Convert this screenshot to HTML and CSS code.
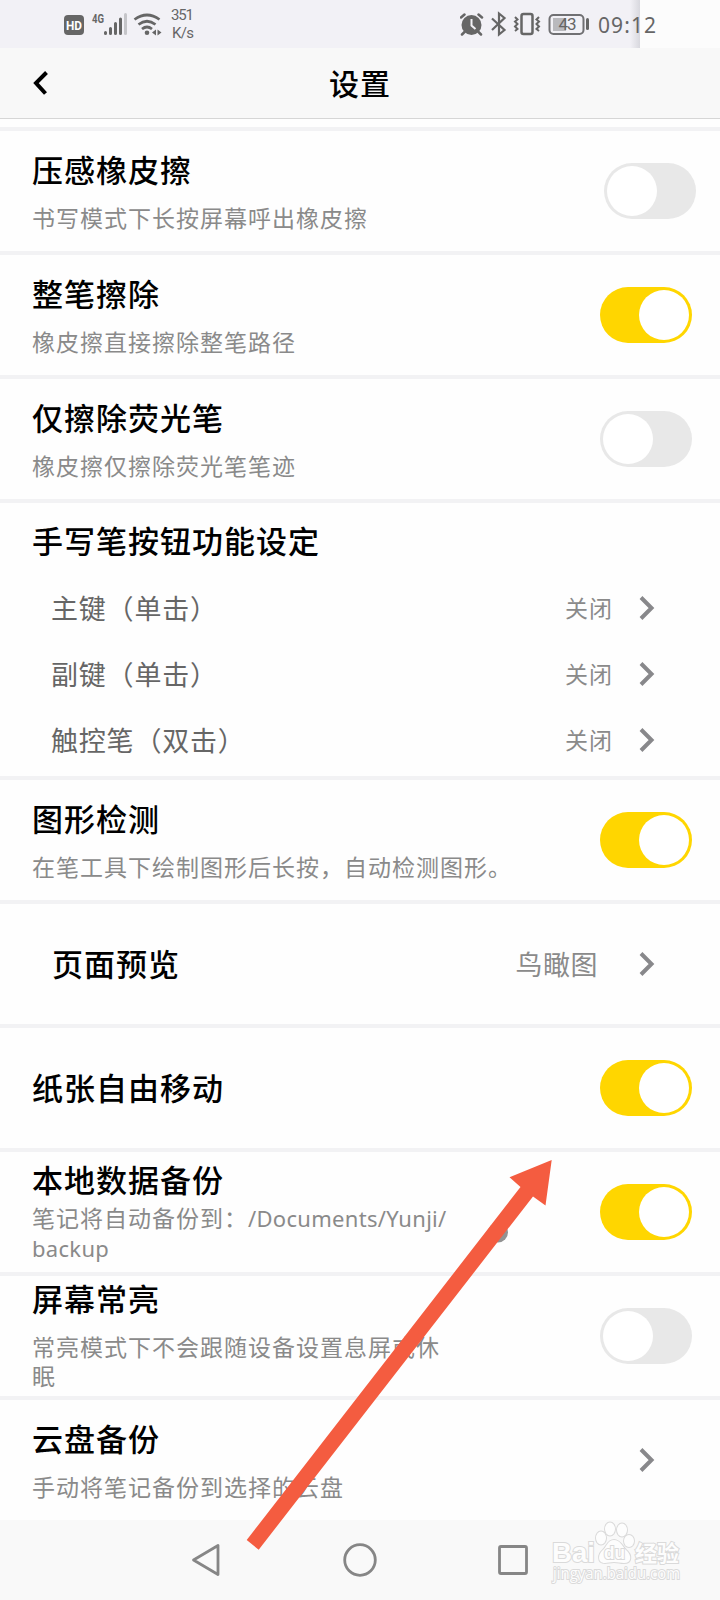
FILE: index.html
```
<!DOCTYPE html>
<html lang="zh-CN">
<head>
    <meta charset="UTF-8">
    <meta name="viewport" content="width=device-width, initial-scale=1.0">
    <title>设置</title>
    <link rel="stylesheet" href="styles.css">
</head>
<body>

    <!-- Status bar -->
    <div class="status-bar">
        <svg class="status-left" width="142" height="48" viewBox="60 0 142 48">
            <rect x="64" y="15" width="20" height="20" rx="4" fill="#666"/>
            <text x="66" y="30" class="hd" textLength="16" lengthAdjust="spacingAndGlyphs">HD</text>
            <text x="92" y="23" class="net" textLength="12" lengthAdjust="spacingAndGlyphs">4G</text>
            <g stroke="#666" stroke-width="3" stroke-linecap="round">
                <path d="M105.5 32.5v1M110.5 28.5v5M115.5 23.5v10M120.5 19v14.5"/>
                <path d="M125.5 14.500v19" stroke="#c5c5c9"/>
            </g>
            <g fill="none" stroke="#666" stroke-width="2.700">
                <path d="M134.500 19.500q12.500-9 25 0M138.500 24.500q8.500-6.500 17 0M142 29q5-4 10 0"/>
            </g>
            <circle cx="147" cy="32.700" r="2.300" fill="#666"/>
            <path d="M152 32.500l4-3v6zM157.500 29.500l4 3-4 3z" fill="#666"/>
            <text x="171" y="20" class="speed" textLength="23">351</text>
            <text x="172" y="38" class="speed" textLength="22">K/s</text>
        </svg>
        <svg class="status-right" width="260" height="48" viewBox="460 0 260 48">
            <defs>
                <linearGradient id="edge">
                    <stop offset="0" stop-color="#d8d8de" stop-opacity="0"/>
                    <stop offset="1" stop-color="#d8d8de"/>
                </linearGradient>
            </defs>
            <rect x="630" y="0" width="10" height="48" fill="url(#edge)"/>
            <rect x="640" y="0" width="80" height="48" fill="#fcfcfc"/>
            <!-- alarm -->
            <circle cx="471.500" cy="25" r="10" fill="#666"/>
            <path d="M461 17.500l3.500-3M478.500 14.500l3.500 3M464.500 32l-2.500 2.500M478.500 32l2.500 2.500" stroke="#666" stroke-width="2.500" stroke-linecap="round"/>
            <path d="M471.500 19v6.500l4 3.500" stroke="#f2f1f6" stroke-width="2" fill="none"/>
            <!-- bluetooth -->
            <path d="M492 18.500l12.500 11.500-5.500 4.500v-21l5.500 4.500-12.500 12" stroke="#666" stroke-width="2.200" fill="none"/>
            <!-- vibrate -->
            <rect x="521.500" y="14" width="11" height="20" rx="2" stroke="#666" stroke-width="2.500" fill="none"/>
            <path d="M515 17l2.500 2.500-2.500 2 2.500 2.500-2.500 2.500 2.500 2.500-2.500 2M539 17l-2.500 2.500 2.500 2-2.500 2.500 2.500 2.500-2.500 2.500 2.500 2" stroke="#666" stroke-width="2" fill="none"/>
            <!-- battery -->
            <rect x="549.500" y="15" width="34" height="19" rx="4" stroke="#707073" stroke-width="2" fill="none"/>
            <rect x="553" y="18" width="13" height="13" fill="#b9b9bd"/>
            <path d="M587.500 19.500v9" stroke="#666" stroke-width="3" stroke-linecap="round"/>
            <text x="558.500" y="30" class="level" textLength="18">43</text>
            <text x="598" y="32.500" class="clock" textLength="58">09:12</text>
        </svg>
    </div>

    <!-- Title bar -->
    <div class="header">
        <svg class="back" width="16" height="26" viewBox="0 0 16 26"><path d="M14.500 2.500L4 13l9.500 10.500" fill="none" stroke="#000" stroke-width="4"/></svg>
        <h1>设置</h1>
    </div>

    <!-- Settings list -->
    <div class="settings">
        <div class="row shifted">
            <div class="text">
                <h2>压感橡皮擦</h2>
                <p>书写模式下长按屏幕呼出橡皮擦</p>
            </div>
            <div class="switch"></div>
        </div>

        <div class="row">
            <div class="text">
                <h2>整笔擦除</h2>
                <p>橡皮擦直接擦除整笔路径</p>
            </div>
            <div class="switch on"></div>
        </div>

        <div class="row">
            <div class="text">
                <h2>仅擦除荧光笔</h2>
                <p>橡皮擦仅擦除荧光笔笔迹</p>
            </div>
            <div class="switch"></div>
        </div>

        <div class="group">
            <h2>手写笔按钮功能设定</h2>
            <div class="option">
                <span class="name">主键（单击）</span>
                <span class="value">关闭</span>
                <svg class="arrow" width="16" height="26" viewBox="0 0 16 26"><path d="M2 2.500L12.500 13 2 23.500"/></svg>
            </div>
            <div class="option">
                <span class="name">副键（单击）</span>
                <span class="value">关闭</span>
                <svg class="arrow" width="16" height="26" viewBox="0 0 16 26"><path d="M2 2.500L12.500 13 2 23.500"/></svg>
            </div>
            <div class="option">
                <span class="name">触控笔（双击）</span>
                <span class="value">关闭</span>
                <svg class="arrow" width="16" height="26" viewBox="0 0 16 26"><path d="M2 2.500L12.500 13 2 23.500"/></svg>
            </div>
        </div>

        <div class="row">
            <div class="text">
                <h2>图形检测</h2>
                <p>在笔工具下绘制图形后长按，自动检测图形。</p>
            </div>
            <div class="switch on"></div>
        </div>

        <div class="row preview">
            <h2>页面预览</h2>
            <span class="value">鸟瞰图</span>
            <svg class="arrow" width="16" height="26" viewBox="0 0 16 26"><path d="M2 2.500L12.500 13 2 23.500"/></svg>
        </div>

        <div class="row single">
            <h2>纸张自由移动</h2>
            <div class="switch on"></div>
        </div>

        <div class="row">
            <div class="text backup">
                <h2>本地数据备份</h2>
                <p>笔记将自动备份到：<span class="path">/Documents/Yunji/<br>backup</span></p>
            </div>
            <div class="switch on"></div>
        </div>

        <div class="row">
            <div class="text screen">
                <h2>屏幕常亮</h2>
                <p>常亮模式下不会跟随设备设置息屏或休<br>眠</p>
            </div>
            <div class="switch"></div>
        </div>

        <div class="row link">
            <div class="text">
                <h2>云盘备份</h2>
                <p>手动将笔记备份到选择的云盘</p>
            </div>
            <svg class="arrow" width="16" height="26" viewBox="0 0 16 26"><path d="M2 2.500L12.500 13 2 23.500"/></svg>
        </div>
    </div>

    <!-- System navigation -->
    <div class="nav-bar">
        <svg width="32" height="34" viewBox="0 0 32 34"><path d="M3.500 17L28 2.500v29z"/></svg>
        <svg width="34" height="34" viewBox="0 0 34 34"><circle cx="17" cy="17" r="15.300"/></svg>
        <svg width="32" height="32" viewBox="0 0 32 32"><rect x="2.500" y="2.500" width="27" height="27" rx="1.500"/></svg>
    </div>

    <!-- Pointer arrow over the list -->
    <svg class="pointer" width="320" height="400" viewBox="240 1155 320 400">
        <circle cx="498" cy="1232.500" r="10" fill="#929292"/>
        <path d="M551.700 1160L545.500 1205.500 533 1196.500 258.700 1549.700 246.700 1540 520.500 1187 509.500 1177.300z" fill="#f45c40"/>
    </svg>

    <!-- Watermark -->
    <svg class="watermark" width="140" height="70" viewBox="546 1518 140 70">
        <text x="552" y="1562" class="brand" textLength="43" lengthAdjust="spacingAndGlyphs">Bai</text>
        <g class="paw">
            <ellipse cx="601" cy="1538" rx="5" ry="6.500"/>
            <ellipse cx="610" cy="1529" rx="5" ry="6.500"/>
            <ellipse cx="622" cy="1530" rx="5" ry="6.500"/>
            <ellipse cx="629" cy="1541" rx="5" ry="6"/>
            <path d="M614 1540c6 0 8 6 12 10 6 5 6 13-2 13-4 0-6-1-10-1s-6 1-9 1c-8 0-7-9-2-13 4-4 5-10 11-10z"/>
        </g>
        <text x="604" y="1559" class="du" textLength="21" lengthAdjust="spacingAndGlyphs">du</text>
        <text x="635" y="1561" class="cn" textLength="44" lengthAdjust="spacingAndGlyphs">经验</text>
        <text x="553" y="1579" class="site" textLength="127" lengthAdjust="spacingAndGlyphs">jingyan.baidu.com</text>
    </svg>

</body>
</html>
```
FILE: styles.css
```
* {
    box-sizing: border-box;
}

body {
    width: 720px;
    margin: 0;
    position: relative;
    background-color: #fefefe;
    font-family: "Noto Sans CJK SC", sans-serif;
    color: #000;
}

h1, h2, p {
    margin: 0;
}

svg {
    display: block;
    flex: none;
}

/* status bar */
.status-bar {
    display: flex;
    justify-content: space-between;
    height: 48px;
    padding-left: 60px;
    background-color: #f2f1f6;
}

.status-bar text {
    fill: #666;
}

.status-bar .hd {
    font: bold 13px Roboto, sans-serif;
    fill: #fff;
}

.status-bar .net {
    font: bold 13px Roboto, sans-serif;
}

.status-bar .speed {
    font: 15px Roboto, sans-serif;
}

.status-bar .level {
    font: 17px Roboto, sans-serif;
}

.status-bar .clock {
    font: 21px "Noto Sans", sans-serif;
}

/* title bar */
.header {
    display: grid;
    grid-template-columns: 60px 1fr 60px;
    align-items: center;
    height: 71px;
    margin-bottom: 8px;
    background-color: #f8f8f8;
    border-bottom: 1px solid #d6d6d6;
}

.back {
    margin-left: 32px;
}

.header h1 {
    padding-bottom: 3px;
    font-size: 30px;
    font-weight: 500;
    line-height: 40px;
    letter-spacing: 1px;
    text-align: center;
}

/* settings rows */
h2 {
    font-size: 31px;
    font-weight: 500;
    line-height: 40px;
    letter-spacing: 1px;
    white-space: nowrap;
}

.row {
    display: flex;
    align-items: center;
    justify-content: space-between;
    height: 124px;
    padding: 0 28px 0 32px;
    border-top: 4px solid #f2f2f4;
}

.row.shifted {
    padding-right: 24px;
}

.text {
    align-self: flex-start;
    padding-top: 18px;
}

.text p {
    margin-top: 13px;
    font-size: 23px;
    line-height: 30px;
    letter-spacing: 1px;
    color: #8a8a8a;
    white-space: nowrap;
}

.text.backup {
    padding-top: 7px;
}

.text.backup p {
    margin-top: 4px;
    line-height: 29px;
}

.path {
    font-family: "Noto Sans", sans-serif;
    font-size: 22px;
    letter-spacing: 0.3px;
}

.text.screen {
    padding-top: 2px;
}

.text.screen p {
    margin-top: 14px;
    line-height: 29px;
}

.switch {
    flex: none;
    display: flex;
    width: 92px;
    height: 56px;
    padding: 3px;
    border-radius: 28px;
    background-color: #e8e8e8;
}

.switch::before {
    content: "";
    width: 50px;
    height: 50px;
    border-radius: 50%;
    background-color: #fff;
}

.switch.on {
    justify-content: flex-end;
    background-color: #ffd600;
}

/* pen button group */
.group {
    height: 277px;
    padding: 17px 65px 0 32px;
    border-top: 4px solid #f2f2f4;
}

.group h2 {
    margin-bottom: 15px;
}

.option {
    display: flex;
    align-items: center;
    height: 66px;
    padding-left: 19px;
}

.name {
    flex: 1;
    padding-bottom: 2px;
    font-size: 27px;
    letter-spacing: 0.8px;
    color: #666;
}

.value {
    padding-bottom: 2px;
    font-size: 23px;
    letter-spacing: 1px;
    color: #8a8a8a;
}

.option .value {
    margin-right: 26px;
}

.arrow path {
    fill: none;
    stroke: #88888b;
    stroke-width: 4;
}

.row.preview {
    padding: 0 65px 0 52px;
}

.preview h2,
.single h2 {
    padding-bottom: 3px;
}

.preview .value {
    margin: 0 41px 0 auto;
    font-size: 27px;
    letter-spacing: 0.5px;
}

.row.link {
    padding-right: 65px;
}

/* system navigation */
.nav-bar {
    display: flex;
    justify-content: space-between;
    align-items: center;
    height: 80px;
    padding: 0 191px 0 190px;
    background-color: #f9f9f9;
}

.nav-bar svg {
    fill: none;
    stroke: #868686;
    stroke-width: 2.8;
    stroke-linejoin: round;
}

/* overlays */
.pointer {
    position: absolute;
    left: 240px;
    top: 1155px;
}

.watermark {
    position: absolute;
    left: 546px;
    top: 1518px;
}

.watermark text,
.paw {
    fill: #fdfdfd;
    stroke: #dadada;
    stroke-width: 2;
    paint-order: stroke;
}

.brand,
.du {
    font: bold 28px "Liberation Sans", sans-serif;
}

.watermark .du {
    font-size: 18px;
}

.cn {
    font: bold 22px "Noto Sans CJK SC", sans-serif;
}

.site {
    font: 16px "Open Sans", sans-serif;
}
```
